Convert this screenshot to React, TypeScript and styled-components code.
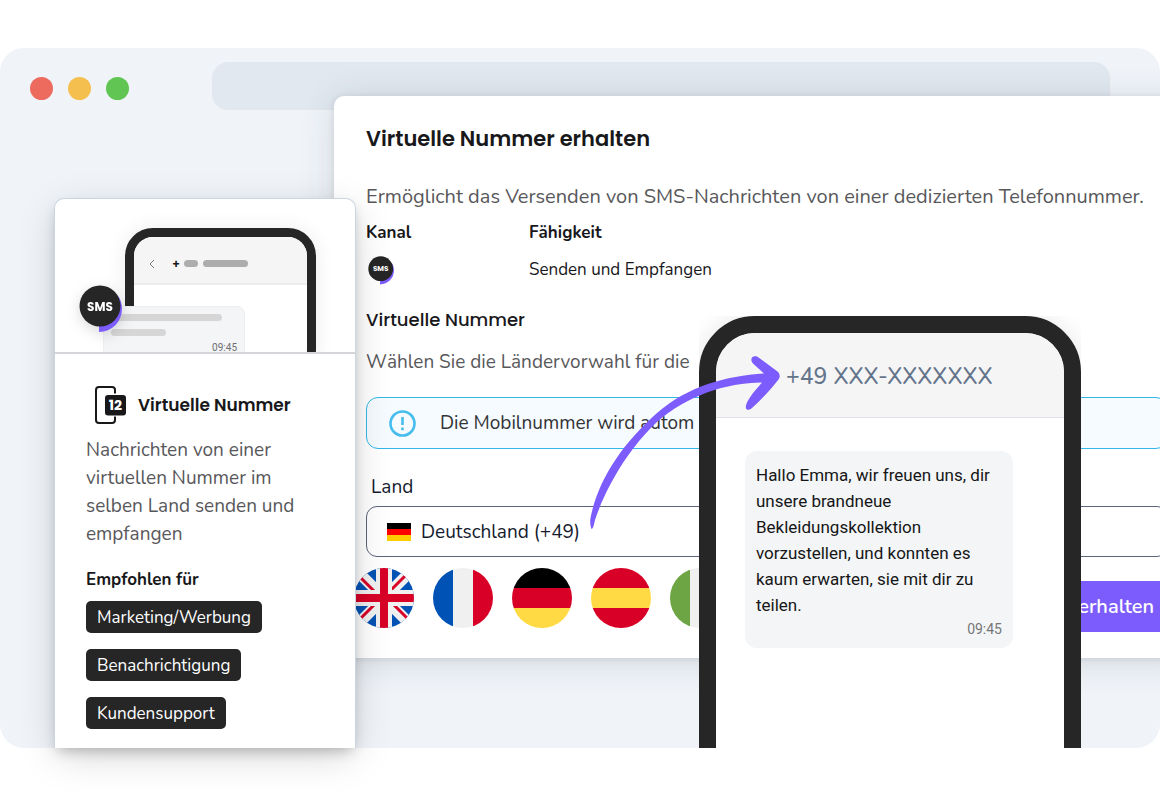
import React from "react";
import styled, { createGlobalStyle } from "styled-components";

const body = `"Nunito", "Open Sans", "Noto Sans", sans-serif`;
const heading = `"Poppins", "Inter", sans-serif`;
const roboto = `"Roboto", sans-serif`;
const ink = "#262626";
const violet = "#7c5cfc";

const GlobalStyle = createGlobalStyle`
  *, *::before, *::after { box-sizing: border-box; }
  html, body { margin: 0; overflow: hidden; background: #fff; }
  body { font-family: ${body}; color: #18181b; }
  h1, h2, h3, p, dl, dt, dd, ul { margin: 0; padding: 0; }
`;

const Page = styled.main`
  padding: 48px 0;
`;

const Browser = styled.div`
  position: relative;
  min-height: 700px;
  border-radius: 24px;
  background: #f0f4f9;
`;

const Chrome = styled.div`
  display: flex;
  align-items: center;
  padding: 14px 50px 0 30px;
`;

const Dots = styled.div`
  display: flex;
  gap: 15px;
  width: 182px;
  margin-top: 4px;
`;

const Dot = styled.span<{ $color: string }>`
  width: 23px;
  height: 23px;
  border-radius: 50%;
  background: ${(p) => p.$color};
`;

const AddressBar = styled.div`
  flex: 1;
  height: 48px;
  border-radius: 16px;
  background: #e1e8f0;
`;

const ModalClip = styled.div`
  position: absolute;
  inset: 0;
  overflow: hidden;
  border-radius: 24px;
`;

const Modal = styled.section`
  position: absolute;
  top: 48px;
  left: 334px;
  right: -40px;
  padding: 28px 32px 26px;
  border-radius: 10px;
  background: #fff;
  box-shadow: 0 4px 36px rgba(38, 50, 56, 0.14), 0 1px 6px rgba(38, 50, 56, 0.12);
`;

const ModalHeader = styled.header`
  display: flex;
  align-items: center;
  justify-content: space-between;
  height: 30px;
`;

const ModalTitle = styled.h1`
  font: 600 21px/30px ${heading};
`;

const CloseButton = styled.button`
  display: flex;
  margin-right: -10px;
  padding: 0;
  border: 0;
  background: none;
  color: #555;
`;

const Intro = styled.p`
  margin-top: 29px;
  font-size: 20px;
  line-height: 28px;
  color: #58585b;
  white-space: nowrap;
`;

const Hint = styled.p`
  margin-top: 14px;
  font-size: 19px;
  line-height: 28px;
  color: #58585b;
  white-space: nowrap;
`;

const Facts = styled.dl`
  display: flex;
  margin-top: 8px;
`;

const Fact = styled.div`
  width: 163px;
  white-space: nowrap;
  font-size: 17px;
  line-height: 28px;

  dt { font-weight: 700; }
  dd { display: flex; align-items: center; height: 28px; margin-top: 9px; }
  svg { margin-left: 2px; }
`;

const SectionTitle = styled.h2`
  margin-top: 22px;
  font: 500 18px/28px ${heading};
`;

const Notice = styled.div`
  display: flex;
  align-items: center;
  gap: 24px;
  height: 52px;
  margin-top: 21px;
  padding: 0 22px;
  border: 1px solid #33b8ea;
  border-radius: 12px;
  background: #f5fbff;
  font-size: 19px;
  color: #333336;
  white-space: nowrap;
`;

const FieldLabel = styled.label`
  display: block;
  margin: 24px 0 5px 5px;
  font-size: 19px;
  line-height: 28px;
  color: #151b2e;
`;

const SelectField = styled.div`
  position: relative;

  svg {
    position: absolute;
    top: 17px;
    left: 21px;
  }
`;

const CountrySelect = styled.select`
  display: block;
  width: 100%;
  height: 51px;
  padding: 0 54px;
  border: 1px solid #5b6478;
  border-radius: 11px;
  appearance: none;
  background: #fff;
  font: 400 19px/28px ${body};
  color: #151b2e;
`;

const ModalFooter = styled.footer`
  display: flex;
  align-items: flex-start;
  justify-content: space-between;
  margin: 11px 0 0 -12px;
`;

const Flags = styled.ul`
  display: flex;
  gap: 19px;
  list-style: none;

  li { display: flex; }
`;

const SubmitButton = styled.button`
  height: 51px;
  margin-top: 13px;
  padding: 0 14px 0 48px;
  border: 0;
  border-radius: 6px;
  background: ${violet};
  color: #fff;
  font: 600 20px/28px ${body};
`;

const Card = styled.article`
  position: absolute;
  top: 150px;
  bottom: 0;
  left: 54px;
  width: 302px;
  border: 1px solid #cbd5e1;
  border-bottom: 0;
  border-radius: 10px 10px 0 0;
  background: #fff;
  box-shadow: 0 10px 40px -4px rgba(0, 0, 0, 0.18), 0 6px 14px -4px rgba(0, 0, 0, 0.26);
`;

const Preview = styled.div`
  position: relative;
  height: 155px;
  overflow: hidden;
  border-bottom: 2px solid #d5d6d9;
  border-radius: 10px 10px 0 0;
`;

const MiniPhone = styled.div`
  width: 191px;
  height: 150px;
  margin: 29px 0 0 70px;
  overflow: hidden;
  border: 9px solid ${ink};
  border-radius: 28px;
  background: #fff;
  box-shadow: 0 0 20px rgba(0, 0, 0, 0.08);
`;

const MiniHeader = styled.div`
  display: flex;
  align-items: center;
  height: 48px;
  padding: 7px 0 0 14px;
  border-bottom: 2px solid #ececec;
  background: #f5f5f5;
`;

const Bar = styled.span<{ $w: number; $color: string; $left?: number }>`
  width: ${(p) => p.$w}px;
  height: 7px;
  margin-left: ${(p) => p.$left ?? 0}px;
  border-radius: 4px;
  background: ${(p) => p.$color};
`;

const Plus = styled.span`
  width: 12px;
  margin-left: 16px;
  font: 600 12px/14px ${heading};
`;

const MiniBubble = styled.div`
  position: absolute;
  top: 107px;
  left: 48px;
  display: flex;
  flex-direction: column;
  gap: 8px;
  width: 142px;
  height: 60px;
  padding: 7px 7px 0;
  border: 1px solid #eceef1;
  border-radius: 8px;
  background: #f3f5f7;
`;

const MiniTime = styled.time`
  align-self: flex-end;
  margin-top: -3px;
  font: 400 10px/14px ${roboto};
  color: #6f6f6f;
`;

const PreviewBadge = styled.div`
  position: absolute;
  top: 86px;
  left: 24px;
  display: flex;
  filter: drop-shadow(0 4px 7px rgba(0, 0, 0, 0.14));
`;

const CardBody = styled.div`
  padding: 30px 30px 18px 31px;
`;

const CardTitleRow = styled.div`
  display: flex;
  align-items: center;
  gap: 11px;
  height: 42px;
  padding-left: 8px;
`;

const CardTitle = styled.h2`
  font: 600 17px/28px ${heading};
  white-space: nowrap;
`;

const CardText = styled.p`
  margin-top: 10px;
  font-size: 19px;
  line-height: 28px;
  color: #58585b;
`;

const CardLabel = styled.h3`
  margin-top: 20px;
  font-size: 17px;
  line-height: 24px;
`;

const Tags = styled.ul`
  display: flex;
  flex-direction: column;
  align-items: flex-start;
  gap: 16px;
  margin-top: 9px;
  list-style: none;
`;

const Tag = styled.li`
  padding: 2px 11px 0;
  border-radius: 5px;
  background: ${ink};
  color: #fff;
  font-size: 17px;
  line-height: 30px;
`;

const PhoneClip = styled.div`
  position: absolute;
  top: 268px;
  bottom: 0;
  left: 699px;
  width: 382px;
  overflow: hidden;
`;

const Phone = styled.section`
  height: 520px;
  overflow: hidden;
  border: 17px solid ${ink};
  border-radius: 56px;
  background: #fff;
  box-shadow: 0 0 24px rgba(0, 0, 0, 0.1);
`;

const PhoneHeader = styled.header`
  display: flex;
  align-items: center;
  height: 85px;
  padding: 2px 0 0 70px;
  border-bottom: 1px solid #e0e2ec;
  background: #f5f5f5;
  color: #64748b;
  font-size: 23px;
  font-weight: 500;
  white-space: nowrap;
`;

const Bubble = styled.div`
  width: 268px;
  margin: 33px 0 0 29px;
  padding: 11px 11px 8px;
  border-radius: 12px;
  background: #f3f5f7;
  font: 400 17px/26px ${roboto};
  color: #161616;
`;

const Time = styled.time`
  display: block;
  text-align: right;
  font-size: 14px;
  line-height: 22px;
  color: #777;
`;

const ArrowSvg = styled.svg`
  position: absolute;
  top: 302px;
  left: 585px;
`;

function SmsBadge({ size }: { size: number }) {
  return (
    <svg width={size} height={size} viewBox="0 0 48 48" role="img" aria-label="SMS">
      <path d="M20 20V47A23 23 0 0 0 43 24C43 19 41.5 14 39 11Z" fill={violet} />
      <circle cx="21" cy="21" r="20.5" fill={ink} />
      <text x="21" y="25.5" textAnchor="middle" fontFamily="Poppins, Inter, sans-serif" fontWeight="700" fontSize="12" fill="#fff">
        SMS
      </text>
    </svg>
  );
}

function NumberIcon() {
  return (
    <svg width="33" height="38" viewBox="0 0 33 38" aria-hidden="true">
      <rect x="2" y="1" width="19" height="36" rx="3" fill="none" stroke="#18181b" strokeWidth="2" />
      <rect x="10" y="7.5" width="23" height="23" fill="#fff" />
      <rect x="11" y="9" width="21" height="20.5" rx="3" fill="#18181b" />
      <text x="21.5" y="24" textAnchor="middle" fontFamily="Poppins, Inter, sans-serif" fontWeight="700" fontSize="14" fill="#fff">
        12
      </text>
    </svg>
  );
}

const RED = "#d80027";
const YELLOW = "#ffda44";
const BLUE = "#0052b4";
const LIGHT = "#f0f0f0";

function RoundFlag({ id, label, children }: { id: string; label: string; children: React.ReactNode }) {
  return (
    <li>
      <svg width="60" height="60" viewBox="0 0 60 60" role="img" aria-label={label}>
        <clipPath id={id}>
          <circle cx="30" cy="30" r="30" />
        </clipPath>
        <g clipPath={`url(#${id})`}>{children}</g>
      </svg>
    </li>
  );
}

function Bands({ colors, vertical }: { colors: string[]; vertical?: boolean }) {
  const cuts = [0, 20, 40];
  return (
    <>
      {colors.map((c, i) =>
        vertical ? (
          <rect key={i} x={cuts[i]} width="20" height="60" fill={c} />
        ) : (
          <rect key={i} y={cuts[i]} width="60" height="20" fill={c} />
        )
      )}
    </>
  );
}

function UnionFlag() {
  return (
    <RoundFlag id="flag-gb" label="Vereinigtes Königreich">
      <rect width="60" height="60" fill={BLUE} />
      <path d="M4 4L56 56M56 4L4 56" stroke={LIGHT} strokeWidth="11" />
      <path d="M6 9L23 26M37 22L54 5M5 52L22 35M37 34L55 52" stroke={RED} strokeWidth="3" />
      <path d="M30 0V60M0 30H60" stroke={LIGHT} strokeWidth="16" />
      <path d="M30 0V60M0 30H60" stroke={RED} strokeWidth="8" />
    </RoundFlag>
  );
}

export default function App() {
  return (
    <Page>
      <GlobalStyle />
      <Browser>
        <Chrome>
          <Dots>
            <Dot $color="#ed6a5e" />
            <Dot $color="#f5bf4f" />
            <Dot $color="#61c554" />
          </Dots>
          <AddressBar />
        </Chrome>

        <ModalClip>
          <Modal>
            <ModalHeader>
              <ModalTitle>Virtuelle Nummer erhalten</ModalTitle>
              <CloseButton aria-label="Schließen">
                <svg width="18" height="14" viewBox="0 0 18 14" fill="none" stroke="currentColor" strokeWidth="2" strokeLinecap="round">
                  <path d="M1 1L13 13M13 1L1 13" />
                </svg>
              </CloseButton>
            </ModalHeader>
            <Intro>Ermöglicht das Versenden von SMS-Nachrichten von einer dedizierten Telefonnummer.</Intro>
            <Facts>
              <Fact>
                <dt>Kanal</dt>
                <dd>
                  <SmsBadge size={29} />
                </dd>
              </Fact>
              <Fact>
                <dt>Fähigkeit</dt>
                <dd>Senden und Empfangen</dd>
              </Fact>
            </Facts>
            <SectionTitle>Virtuelle Nummer</SectionTitle>
            <Hint>Wählen Sie die Ländervorwahl für die</Hint>
            <Notice>
              <svg width="27" height="27" viewBox="0 0 27 27" fill="none" stroke="#46bdec" strokeWidth="2.6" aria-hidden="true">
                <circle cx="13.5" cy="13.5" r="12" />
                <path d="M13.5 7V15M13.5 17.5V20.2" />
              </svg>
              Die Mobilnummer wird autom
            </Notice>
            <FieldLabel htmlFor="country">Land</FieldLabel>
            <SelectField>
              <CountrySelect id="country" defaultValue="de">
                <option value="de">Deutschland (+49)</option>
              </CountrySelect>
              <svg width="24" height="18" viewBox="0 0 24 18" aria-hidden="true">
                <rect width="24" height="6" fill="#000" />
                <rect y="6" width="24" height="6" fill="#f00" />
                <rect y="12" width="24" height="6" fill="#fc0" />
              </svg>
            </SelectField>
            <ModalFooter>
              <Flags>
                <UnionFlag />
                <RoundFlag id="flag-fr" label="Frankreich">
                  <Bands vertical colors={[BLUE, LIGHT, RED]} />
                </RoundFlag>
                <RoundFlag id="flag-de" label="Deutschland">
                  <Bands colors={["#000", RED, YELLOW]} />
                </RoundFlag>
                <RoundFlag id="flag-es" label="Spanien">
                  <Bands colors={[RED, YELLOW, RED]} />
                </RoundFlag>
                <RoundFlag id="flag-it" label="Italien">
                  <Bands vertical colors={["#6da544", LIGHT, RED]} />
                </RoundFlag>
              </Flags>
              <SubmitButton>erhalten</SubmitButton>
            </ModalFooter>
          </Modal>
        </ModalClip>

        <Card>
          <Preview>
            <MiniPhone>
              <MiniHeader>
                <svg width="8" height="10" viewBox="0 0 8 10" fill="none" stroke="#777" aria-hidden="true">
                  <path d="M6 1L2 5L6 9" />
                </svg>
                <Plus>+</Plus>
                <Bar $w={14} $color="#adadad" />
                <Bar $w={45} $left={5} $color="#adadad" />
              </MiniHeader>
            </MiniPhone>
            <MiniBubble>
              <Bar $w={111} $color="#d6d6d6" />
              <Bar $w={55} $color="#d6d6d6" />
              <MiniTime>09:45</MiniTime>
            </MiniBubble>
            <PreviewBadge>
              <SmsBadge size={48} />
            </PreviewBadge>
          </Preview>
          <CardBody>
            <CardTitleRow>
              <NumberIcon />
              <CardTitle>Virtuelle Nummer</CardTitle>
            </CardTitleRow>
            <CardText>Nachrichten von einer virtuellen Nummer im selben Land senden und empfangen</CardText>
            <CardLabel>Empfohlen für</CardLabel>
            <Tags>
              <Tag>Marketing/Werbung</Tag>
              <Tag>Benachrichtigung</Tag>
              <Tag>Kundensupport</Tag>
            </Tags>
          </CardBody>
        </Card>

        <PhoneClip>
          <Phone>
            <PhoneHeader>+49 XXX-XXXXXXX</PhoneHeader>
            <Bubble>
              Hallo Emma, wir freuen uns, dir unsere brandneue Bekleidungskollektion vorzustellen, und konnten es kaum
              erwarten, sie mit dir zu teilen.
              <Time>09:45</Time>
            </Bubble>
          </Phone>
        </PhoneClip>

        <ArrowSvg width="200" height="182" viewBox="585 350 200 182" fill={violet} aria-hidden="true">
          <path d="M591.5 529C590 525 590 521 590.5 518C598 480 622 444 657 413C688 386 726 376 764 373.5L753 363.5C750.5 361 751 357.5 753.5 356.5C755 356 757 356 758.5 357.5L777.5 371.5C780 373.5 780.5 377 778.5 379.5C771 389 762 399 752 408C750 410 747 410.5 746 408.5C745 405 748 400 753 393L762 382.5C726 383 688 395 657 422C631 446 607 484 595 520C594 525 593 529 591.5 529Z" />
        </ArrowSvg>
      </Browser>
    </Page>
  );
}
